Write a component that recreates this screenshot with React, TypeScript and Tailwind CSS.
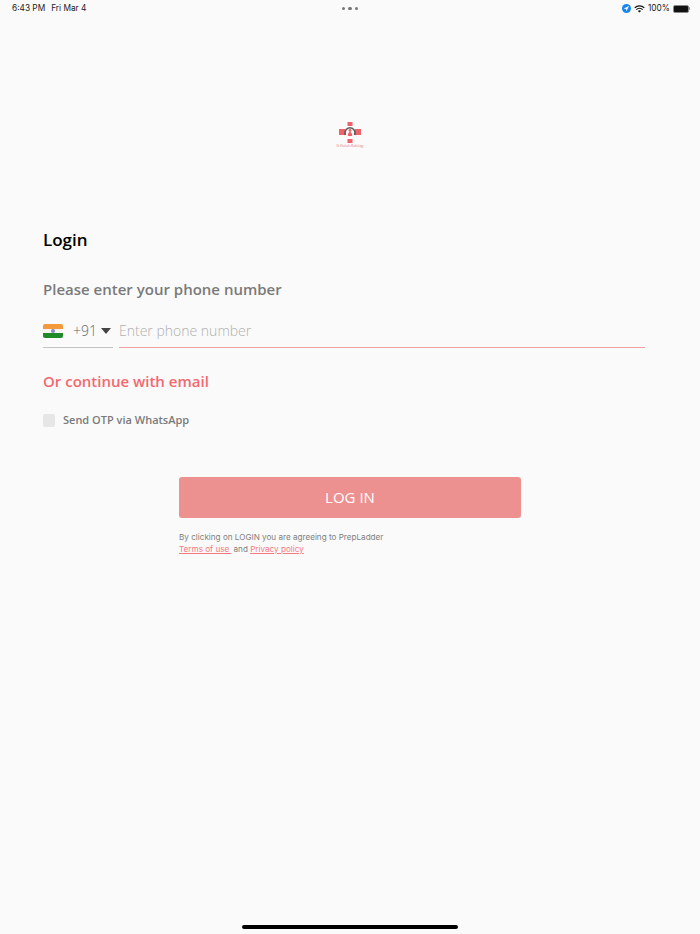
import React from 'react';

const StatusBar = () => (
  <div className="h-[17px] flex items-center justify-between pl-[12px] pr-[10px] font-['Inter',sans-serif] text-[8.3px] text-[#222]">
    <div className="flex gap-[6px]">
      <span>6:43 PM</span>
      <span>Fri Mar 4</span>
    </div>
    <div className="flex gap-[3px] mr-[8px]">
      <span className="w-[3.5px] h-[3.5px] rounded-full bg-[#777]" />
      <span className="w-[3.5px] h-[3.5px] rounded-full bg-[#777]" />
      <span className="w-[3.5px] h-[3.5px] rounded-full bg-[#777]" />
    </div>
    <div className="flex items-center gap-[3px]">
      <svg width="9" height="9" viewBox="0 0 9 9">
        <circle cx="4.5" cy="4.5" r="4.5" fill="#1a84f0" />
        <path d="M7 2 L1.8 4.6 L4.1 4.9 L4.4 7.2 Z" fill="#fff" />
      </svg>
      <svg width="11" height="8" viewBox="0 0 11 8" fill="none" stroke="#111" strokeWidth="1.2">
        <path d="M.7 2.9a6.7 6.7 0 0 1 9.6 0" />
        <path d="M2.4 4.6a4.2 4.2 0 0 1 6.2 0" />
        <path d="M5.5 7.6 3.9 6a2.2 2.2 0 0 1 3.2 0Z" fill="#111" stroke="none" />
      </svg>
      <span>100%</span>
      <div className="flex items-center">
        <div className="w-[16px] h-[8px] rounded-[2px] bg-[#111] border border-[#888]" />
        <div className="w-[1px] h-[3px] bg-[#888] rounded-r-sm" />
      </div>
    </div>
  </div>
);

const Logo = () => (
  <div className="flex flex-col items-center">
    <svg width="24" height="21" viewBox="0 0 24 21">
      <rect x="9.5" y="0" width="5" height="4" fill="#f0626a" />
      <rect x="1" y="7" width="6" height="6" fill="#f0626a" />
      <rect x="17" y="7" width="6" height="6" fill="#f0626a" />
      <rect x="9.5" y="17" width="5" height="4" fill="#f0626a" />
      <path d="M7.5 13a5 5 0 1 1 9 0" fill="none" stroke="#5a5a5a" strokeWidth="1.6" />
      <circle cx="12" cy="8.5" r="1.4" fill="#f0626a" />
      <path d="M9.8 14c0-2.6 1-4 2.2-4s2.2 1.4 2.2 4Z" fill="#f0626a" />
    </svg>
    <span className="text-[2.7px] leading-[4px] mt-[1px] text-[#ee6a70] font-['Open_Sans',sans-serif] whitespace-nowrap">
      Dr Khaled's Radiology
    </span>
  </div>
);

const IndiaFlag = () => (
  <div className="w-[20px] h-[14px] rounded-[2px] overflow-hidden flex flex-col">
    <div className="h-[5px] bg-[#f39a3c]" />
    <div className="h-[4px] bg-[#f5f5f5] flex items-center justify-center">
      <span className="w-[4px] h-[4px] rounded-full bg-[#8a8ac0]" />
    </div>
    <div className="h-[5px] bg-[#1f8a2a]" />
  </div>
);

export default function App() {
  return (
    <div className="relative w-[700px] h-[934px] bg-[#fafafa] font-['Open_Sans',sans-serif] overflow-hidden">
      <StatusBar />

      <div className="flex justify-center pt-[105px]">
        <Logo />
      </div>

      <div className="px-[43px] pt-[80px]">
        <h1 className="text-[17px] leading-[24px] font-semibold text-black">Login</h1>
        <p className="mt-[26px] text-[15px] leading-[22px] font-semibold text-[#7a7a7a]">
          Please enter your phone number
        </p>

        <div className="mt-[14px] flex gap-[6px] w-[602px]">
          <div className="w-[70px] h-[34px] border-b border-[#c4c4c4] flex items-center">
            <IndiaFlag />
            <span className="ml-[10px] text-[14px] font-light text-[#666]">+91</span>
            <span className="ml-[4px] w-0 h-0 border-x-[5.5px] border-x-transparent border-t-[6px] border-t-[#444]" />
          </div>
          <div className="flex-1 h-[34px] border-b border-[#f0a0a0] flex items-center text-[14px] font-light text-[#b0b0b0]">
            Enter phone number
          </div>
        </div>

        <p className="mt-[22px] text-[15px] leading-[22px] font-semibold text-[#f4686f]">
          Or continue with email
        </p>

        <div className="mt-[20px] flex items-center gap-[8px]">
          <span className="w-[12px] h-[13px] rounded-[2px] bg-[#e6e6e6]" />
          <span className="text-[11px] leading-[16px] font-semibold text-[#7a7a7a]">Send OTP via WhatsApp</span>
        </div>

        <div className="mt-[49px] ml-[136px] w-[342px]">
          <button className="w-full h-[41px] rounded-[3px] bg-[#ec9090] text-white text-[15px]">LOG IN</button>
          <div className="mt-[13px] font-['Inter',sans-serif] text-[8.15px] leading-[12px] text-[#808080]">
            <div>By clicking on LOGIN you are agreeing to PrepLadder</div>
            <div>
              <a className="text-[#f57a80] underline">Terms of use </a>
              <span className="ml-[2px]">and </span>
              <a className="text-[#f57a80] underline">Privacy policy</a>
            </div>
          </div>
        </div>
      </div>

      <div className="absolute bottom-[5px] left-[242px] w-[216px] h-[4px] rounded-full bg-black" />
    </div>
  );
}
